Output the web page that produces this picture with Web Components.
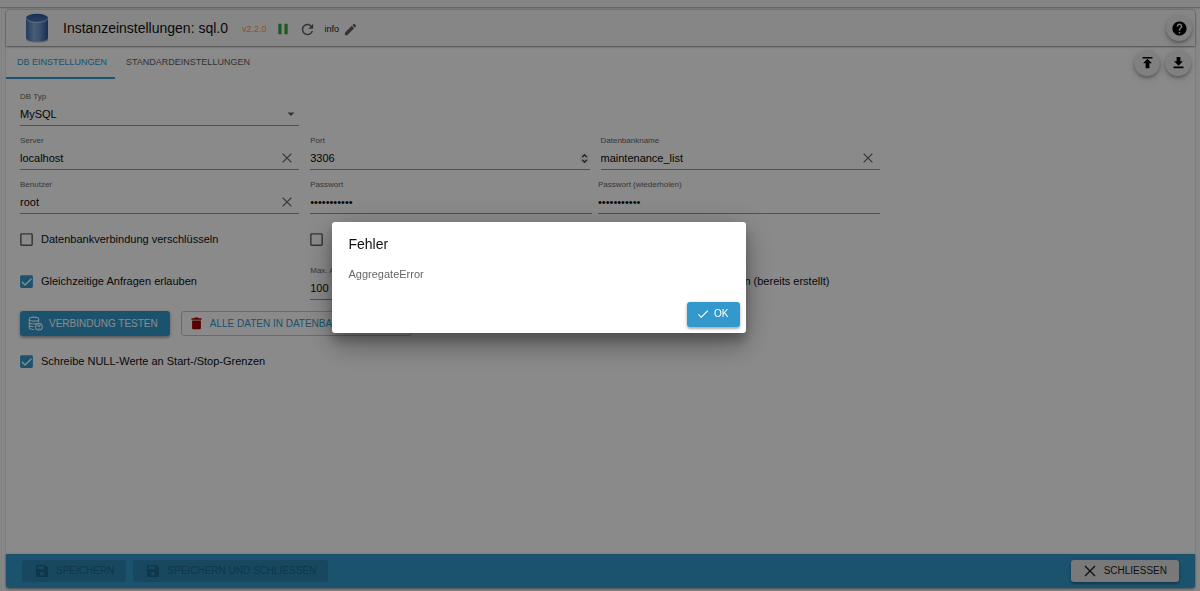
<!DOCTYPE html>
<html lang="de">
<head>
<meta charset="utf-8">
<meta name="viewport" content="width=device-width, initial-scale=1">
<title>Instanzeinstellungen: sql.0</title>
<style>
  html, body { margin: 0; height: 100%; }
  body { background: #fafafa; color: #101010; font-family: "Liberation Sans", Arial, sans-serif; font-size: 11px; }
</style>
</head>
<body>
<settings-page></settings-page>
<error-dialog heading="Fehler">AggregateError</error-dialog>

<script>
const ICONS = {
  up: '<path d="M4 3h16v2.500H4zM12 6l7 7h-4v8H9v-8H5z"/>',
  down: '<path d="M9 3h6v7h4l-7 7-7-7h4zM4 18.500h16V21H4z"/>',
  help: '<path d="M12 2C6.48 2 2 6.48 2 12s4.48 10 10 10 10-4.48 10-10S17.52 2 12 2zm1 17h-2v-2h2v2zm2.07-7.75l-.9.92C13.45 12.9 13 13.5 13 15h-2v-.5c0-1.1.45-2.1 1.17-2.83l1.24-1.26c.37-.36.59-.86.59-1.41 0-1.1-.9-2-2-2s-2 .9-2 2H8c0-2.21 1.79-4 4-4s4 1.79 4 4c0 .88-.36 1.68-.93 2.25z"/>',
  pause: '<path d="M4 3h5.500v18H4zM14.500 3H20v18h-5.500z"/>',
  refresh: '<path d="M17.65 6.35C16.2 4.9 14.21 4 12 4c-4.42 0-7.99 3.58-7.99 8s3.57 8 7.99 8c3.73 0 6.84-2.55 7.73-6h-2.08c-.82 2.33-3.04 4-5.65 4-3.31 0-6-2.69-6-6s2.69-6 6-6c1.66 0 3.14.69 4.22 1.78L13 11h7V4l-2.35 2.35z"/>',
  edit: '<path d="M3 17.25V21h3.75L17.81 9.94l-3.75-3.75L3 17.25zM20.71 7.04c.39-.39.39-1.02 0-1.41l-2.34-2.34c-.39-.39-1.02-.39-1.41 0l-1.83 1.83 3.75 3.75 1.83-1.83z"/>',
  close: '<path d="M4.500 4.500l15 15M19.500 4.500l-15 15" fill="none" stroke="currentColor" stroke-width="2"/>',
  check: '<path d="M9 16.17L4.83 12l-1.42 1.41L9 19 21 7l-1.41-1.41z"/>',
  save: '<path d="M17 3H5c-1.11 0-2 .9-2 2v14c0 1.1.89 2 2 2h14c1.1 0 2-.9 2-2V7l-4-4zm-5 16c-1.66 0-3-1.34-3-3s1.34-3 3-3 3 1.34 3 3-1.34 3-3 3zm3-10H5V5h10v4z"/>',
  trash: '<path d="M5 19c0 1.100.9 2 2 2h10c1.100 0 2-.9 2-2V7H5v12zM20 3.500h-4.500l-1-1h-5l-1 1H4V6h16V3.500z"/>',
  arrow: '<path d="M5 9l7 7 7-7z"/>',
  spin: '<rect x="2" y="0" width="20" height="24" rx="9" fill="#0001"/><path d="M7 9l5-5 5 5M7 15l5 5 5-5" fill="none" stroke="currentColor" stroke-width="2.500"/>',
  box: '<path d="M19 5v14H5V5h14m0-2H5c-1.100 0-2 .9-2 2v14c0 1.100.9 2 2 2h14c1.100 0 2-.9 2-2V5c0-1.100-.9-2-2-2z"/>',
  boxOn: '<path d="M19 3H5c-1.110 0-2 .9-2 2v14c0 1.100.89 2 2 2h14c1.110 0 2-.9 2-2V5c0-1.100-.89-2-2-2z"/><path d="M5.500 12.500l4.500 4.500 9-9" fill="none" stroke="#fff" stroke-width="2"/>',
  database: '<g fill="none" stroke="currentColor" stroke-width="1.7"><ellipse cx="9.500" cy="5" rx="7.500" ry="3.200"/><path d="M2 5v4.500c0 1.800 3.400 3.200 7.500 3.200M17 5v5M2 9.500V14c0 1.800 3 3.200 7 3.200M2 14v4.500c0 1.800 3.500 3.200 8 3.200M9.500 12.700c2 0 4-.4 5.500-1.200"/><circle cx="17.500" cy="17" r="5.300"/><path d="M14.500 15.500c2-1.500 4-1.500 6 0M16 17.500c1-.8 2-.8 3 0M17.500 19v1.500"/></g>'
};

const sheet = `
  *, *::before { box-sizing: border-box; }
  button, input, select { font: inherit; color: inherit; margin: 0; }
`;

class BaseElement extends HTMLElement {
  connectedCallback() {
    if (this.shadowRoot) return;
    this.attachShadow({ mode: 'open' }).innerHTML = `<style>${sheet}${this.css()}</style>${this.html()}`;
  }
  attr(name, fallback = '') { return this.getAttribute(name) ?? fallback; }
}

customElements.define('ui-icon', class extends BaseElement {
  css() {
    return `:host { display: block; flex: none; width: var(--icon-size, 14px); height: var(--icon-size, 14px); }
      svg { display: block; width: 100%; height: 100%; fill: currentColor; }`;
  }
  html() { return `<svg viewBox="0 0 24 24" aria-hidden="true">${ICONS[this.attr('name')]}</svg>`; }
});

customElements.define('db-logo', class extends BaseElement {
  css() { return ':host { display: block; flex: none; width: 24px; height: 30px; } svg { display: block; width: 100%; height: 100%; }'; }
  html() {
    return `<svg viewBox="0 0 24 30" role="img" aria-label="SQL">
      <defs>
        <linearGradient id="side"><stop offset="0" stop-color="#3f6fb0"/><stop offset=".35" stop-color="#83abd8"/><stop offset=".6" stop-color="#7099c9"/><stop offset="1" stop-color="#2b5899"/></linearGradient>
        <linearGradient id="lid" x2="0" y2="1"><stop offset="0" stop-color="#2a5595"/><stop offset="1" stop-color="#4a7cc0"/></linearGradient>
      </defs>
      <ellipse cx="12.500" cy="27" rx="11" ry="2.500" fill="#0004"/>
      <path d="M1 5v20c0 2.200 5 3.500 11 3.500s11-1.300 11-3.500V5z" fill="url(#side)"/>
      <ellipse cx="12" cy="5" rx="11" ry="4.200" fill="url(#lid)"/>
      <path d="M1.300 5.500c.5 2.200 5 3.900 10.700 3.900s10.200-1.700 10.700-3.900" fill="none" stroke="#b9cfe8"/>
    </svg>`;
  }
});

customElements.define('round-button', class extends BaseElement {
  css() {
    return `:host { display: block; flex: none; }
      button { display: grid; place-items: center; width: 26px; height: 26px; padding: 0; border: 0; border-radius: 50%;
        background: #ececec; color: #000; box-shadow: 0 2px 3px #0004, 0 3px 8px #0002; --icon-size: var(--round-icon, 15px); }`;
  }
  html() { return `<button type="button" aria-label="${this.attr('label')}"><ui-icon name="${this.attr('icon')}"></ui-icon></button>`; }
});

customElements.define('plain-icon-button', class extends BaseElement {
  css() { return ':host { display: block; flex: none; } button { display: block; padding: 0; border: 0; background: none; }'; }
  html() { return `<button type="button" aria-label="${this.attr('label')}"><ui-icon name="${this.attr('icon')}"></ui-icon></button>`; }
});

customElements.define('action-button', class extends BaseElement {
  css() {
    return `:host { display: block; flex: none; }
      button { display: flex; align-items: center; gap: 6px; height: var(--button-height, 22px); padding: 0 12px 0 11px;
        border: 0; border-radius: 3px; font-size: 10px; line-height: 12px; white-space: nowrap; text-transform: uppercase;
        background: #e0e0e0; color: #1c1c1c; box-shadow: 0 2px 2px #0003, 0 1px 4px #0003; --icon-size: 16px; }
      :host([kind="primary"]) button { background: #3399cc; color: #fff; padding: 0 12px 0 8px; --icon-size: 15px; }
      :host([kind="confirm"]) button { background: #3399cc; color: #fff; padding: 0 11px 0 9px; gap: 4px; --icon-size: 14px; }
      :host([kind="outline"]) button { background: none; color: #3399cc; border: 1px solid #a3cfe8; box-shadow: none; padding: 0 14px 0 7px; --icon-size: 15px; }
      :host([kind="outline"]) ui-icon { color: #a00000; }
      button:disabled { background: #2b86b2; color: #1d6488; box-shadow: none; padding: 0 12px; }`;
  }
  html() {
    return `<button type="button" ${this.hasAttribute('disabled') ? 'disabled' : ''}>
      <ui-icon name="${this.attr('icon')}"></ui-icon><slot></slot></button>`;
  }
});

customElements.define('text-field', class extends BaseElement {
  css() {
    return `:host { display: block; min-width: 0; }
      label { display: block; font-size: 8px; line-height: 12px; color: #666; }
      .line { display: flex; align-items: center; height: 23px; border-bottom: 1px solid #949494; --icon-size: 14px; color: #606060; }
      input, select { flex: 1; min-width: 0; width: 100%; height: 22px; padding: 0; border: 0; outline: 0; background: none;
        appearance: none; -moz-appearance: textfield; color: #080808; font-size: 11px; opacity: 1; }
      input::-webkit-inner-spin-button { appearance: none; }
      plain-icon-button { margin-right: 5px; }
      .arrow { margin-right: 2px; --icon-size: 12px; }
      .spin { --icon-size: 11px; color: #222; }`;
  }
  html() {
    const type = this.attr('type', 'text'), value = this.attr('value');
    const control = type === 'select'
      ? `<select id="c"><option>${value}</option></select><ui-icon class="arrow" name="arrow"></ui-icon>`
      : `<input id="c" type="${type}" value="${value}">`;
    const extra = this.hasAttribute('clearable') ? '<plain-icon-button icon="close" label="Leeren"></plain-icon-button>'
      : type === 'number' ? '<ui-icon class="spin" name="spin"></ui-icon>' : '';
    return `<label for="c">${this.attr('label')}</label><div class="line">${control}${extra}</div>`;
  }
});

customElements.define('check-field', class extends BaseElement {
  css() {
    return `:host { display: block; min-width: 0; }
      label { display: flex; align-items: center; gap: 6px; height: 18px; margin-left: -2px; white-space: nowrap; line-height: 18px; --icon-size: 17px; }
      .mark { position: relative; color: #606060; }
      input { position: absolute; inset: 0; width: 17px; height: 17px; opacity: 0; }
      input:checked ~ .on { display: block; color: #3399cc; }
      input:checked ~ .off, .on { display: none; }`;
  }
  html() {
    const name = this.hasAttribute('label') ? `aria-label="${this.attr('label')}"` : '';
    return `<label><span class="mark"><input type="checkbox" ${name} ${this.hasAttribute('checked') ? 'checked' : ''}>
      <ui-icon class="off" name="box"></ui-icon><ui-icon class="on" name="boxOn"></ui-icon></span><slot></slot></label>`;
  }
});

customElements.define('page-header', class extends BaseElement {
  css() {
    return `:host { display: flex; align-items: center; height: 36px; padding: 0 3px 0 19px; background: #f8f8f8;
        border-radius: 3px 3px 0 0; box-shadow: 0 1px 2px #0006, 0 0 2px #0003; position: relative; z-index: 1; }
      h1 { margin: 0 14px; font-size: 14px; line-height: 20px; font-weight: 400; white-space: nowrap; }
      .small { font-size: 9px; line-height: 12px; }
      .version { color: #ff9f1c; }
      .tools { display: flex; align-items: center; gap: 9px; color: #5f5f5f; padding-top: 2px; }
      .pause { color: #35a83a; --icon-size: 14px; }
      .refresh { --icon-size: 17px; }
      .info { display: flex; align-items: center; gap: 4px; color: #222; --icon-size: 15px; }
      .info plain-icon-button { color: #5f5f5f; }
      round-button { margin-left: auto; --round-icon: 17px; }`;
  }
  html() {
    return `<db-logo></db-logo><h1>Instanzeinstellungen: sql.0</h1>
      <div class="tools"><span class="small version">v2.2.0</span>
        <plain-icon-button class="pause" icon="pause" label="Pause"></plain-icon-button>
        <plain-icon-button class="refresh" icon="refresh" label="Neu starten"></plain-icon-button>
        <span class="small info">info<plain-icon-button icon="edit" label="Loglevel bearbeiten"></plain-icon-button></span></div>
      <round-button icon="help" label="Hilfe"></round-button>`;
  }
});

customElements.define('tab-bar', class extends BaseElement {
  css() {
    return `:host { display: flex; align-items: center; justify-content: space-between; height: 33px; padding-right: 4px; }
      [role=tablist] { display: flex; height: 33px; }
      button { padding: 0 8px 0 11px; border: 0; border-bottom: 2px solid transparent; background: none; font-size: 9px; line-height: 12px; color: #606060; white-space: nowrap; }
      button[aria-selected=true] { color: #3399cc; border-color: #3399cc; }
      .actions { display: flex; gap: 5px; }`;
  }
  html() {
    return `<div role="tablist"><button type="button" role="tab" aria-selected="true">DB EINSTELLUNGEN</button>
      <button type="button" role="tab" aria-selected="false">STANDARDEINSTELLUNGEN</button></div>
      <div class="actions"><round-button icon="up" label="Hochladen"></round-button><round-button icon="down" label="Herunterladen"></round-button></div>`;
  }
});

customElements.define('db-form', class extends BaseElement {
  css() {
    return `:host { display: block; padding: 12px 14px; }
      form { display: grid; gap: 9px; }
      .row { display: grid; grid-template-columns: repeat(4, 1fr); align-items: center; }
      .row > * { margin-right: 11px; }
      .pair { grid-column: span 2; display: grid; grid-template-columns: 1fr 1fr; gap: 6px; }
      .checks { padding: 7px 0 8px; }
      .limits check-field { padding-bottom: 3px; }
      .buttons { display: flex; gap: 11px; padding: 2px 0 7px; --button-height: 25px; }`;
  }
  html() {
    return `<form>
      <div class="row"><text-field type="select" label="DB Typ" value="MySQL"></text-field></div>
      <div class="row">
        <text-field label="Server" value="localhost" clearable></text-field>
        <text-field type="number" label="Port" value="3306"></text-field>
        <text-field label="Datenbankname" value="maintenance_list" clearable></text-field>
      </div>
      <div class="row">
        <text-field label="Benutzer" value="root" clearable></text-field>
        <div class="pair">
          <text-field type="password" label="Passwort" value="xxxxxxxxxxx"></text-field>
          <text-field type="password" label="Passwort (wiederholen)" value="xxxxxxxxxxx"></text-field>
        </div>
      </div>
      <div class="row checks">
        <check-field>Datenbankverbindung verschlüsseln</check-field>
        <check-field label="Werte runden"></check-field>
      </div>
      <div class="row limits">
        <check-field checked>Gleichzeitige Anfragen erlauben</check-field>
        <text-field type="number" label="Max. Anz." value="100"></text-field>
        <check-field>Keine Datenbank erstellen (bereits erstellt)</check-field>
      </div>
      <div class="buttons">
        <action-button kind="primary" icon="database">Verbindung testen</action-button>
        <action-button kind="outline" icon="trash">Alle Daten in Datenbank löschen</action-button>
      </div>
      <check-field checked>Schreibe NULL-Werte an Start-/Stop-Grenzen</check-field>
    </form>`;
  }
});

customElements.define('page-footer', class extends BaseElement {
  css() {
    return `:host { display: flex; align-items: center; gap: 7px; height: 34px; padding: 0 16px 1px; background: #3399cc; border-radius: 0 0 3px 3px; box-shadow: 0 1px 3px #0006; }
      .end { margin-left: auto; }`;
  }
  html() {
    return `<action-button icon="save" disabled>Speichern</action-button>
      <action-button icon="save" disabled>Speichern und schliessen</action-button>
      <action-button class="end" icon="close">Schliessen</action-button>`;
  }
});

customElements.define('settings-page', class extends BaseElement {
  css() {
    return `:host { display: flex; flex-direction: column; min-height: 100vh; }
      .strip { height: 7px; background: #f6f6f6; box-shadow: 0 1px 2px #0005; margin-bottom: 3px; flex: none; }
      .frame { flex: 1; display: flex; flex-direction: column; margin-left: 1px; padding: 0 5px 3px 4px; border-left: 1px solid #ededed; }
      main { flex: 1; display: flex; flex-direction: column; background: #fff; box-shadow: 0 0 2px #0004; border-radius: 3px; }
      db-form { flex: 1; }`;
  }
  html() {
    return `<div class="strip"></div><div class="frame"><main>
      <page-header></page-header><tab-bar></tab-bar><db-form></db-form><page-footer></page-footer></main></div>`;
  }
});

customElements.define('error-dialog', class extends BaseElement {
  css() {
    return `:host { position: fixed; inset: 0; z-index: 10; display: grid; place-items: center; padding: 0 123px 37px 0; background: rgba(0, 0, 0, .46); }
      section { width: 414px; max-width: 90%; background: #fff; border-radius: 3px; box-shadow: 0 8px 10px #0003, 0 16px 26px #0003, 0 4px 32px #0003; }
      h2 { margin: 0; padding: 11px 17px; font-size: 14px; line-height: 22px; font-weight: 400; }
      p { margin: 0; padding: 0 17px 13px; line-height: 17px; color: #666; }
      footer { display: flex; justify-content: flex-end; padding: 6px; --button-height: 25px; }`;
  }
  html() {
    return `<section role="dialog" aria-modal="true" aria-labelledby="t"><h2 id="t">${this.attr('heading')}</h2>
      <p><slot></slot></p><footer><action-button kind="confirm" icon="check">OK</action-button></footer></section>`;
  }
});
</script>
</body>
</html>
